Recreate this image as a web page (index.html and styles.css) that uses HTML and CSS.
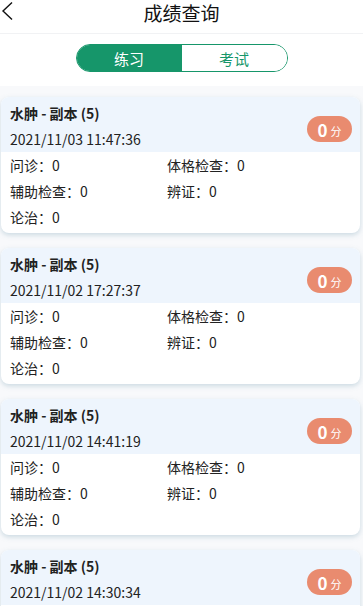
FILE: index.html
```html
<!DOCTYPE html>
<html lang="zh">
<head>
<meta charset="utf-8">
<link rel="stylesheet" href="styles.css">
</head>
<body>
<div class="topbar">
  <svg class="back" width="14" height="22" viewBox="0 0 14 22"><path d="M12 2.5 L3 11 L12 19.5" fill="none" stroke="#111" stroke-width="1.4"/></svg>
  <div class="title">成绩查询</div>
</div>
<div class="tabs-wrap">
  <div class="tabs">
    <div class="tab active">练习</div>
    <div class="tab">考试</div>
  </div>
</div>
<div class="list">
  <div class="card">
    <div class="card-head">
      <div class="head-text">
        <div class="name">水肿 - 副本 (5)</div>
        <div class="date">2021/11/03 11:47:36</div>
      </div>
      <div class="badge"><b>0</b><span>分</span></div>
    </div>
    <div class="card-body">
      <div>问诊：0</div><div>体格检查：0</div>
      <div>辅助检查：0</div><div>辨证：0</div>
      <div>论治：0</div>
    </div>
  </div>
  <div class="card">
    <div class="card-head">
      <div class="head-text">
        <div class="name">水肿 - 副本 (5)</div>
        <div class="date">2021/11/02 17:27:37</div>
      </div>
      <div class="badge"><b>0</b><span>分</span></div>
    </div>
    <div class="card-body">
      <div>问诊：0</div><div>体格检查：0</div>
      <div>辅助检查：0</div><div>辨证：0</div>
      <div>论治：0</div>
    </div>
  </div>
  <div class="card">
    <div class="card-head">
      <div class="head-text">
        <div class="name">水肿 - 副本 (5)</div>
        <div class="date">2021/11/02 14:41:19</div>
      </div>
      <div class="badge"><b>0</b><span>分</span></div>
    </div>
    <div class="card-body">
      <div>问诊：0</div><div>体格检查：0</div>
      <div>辅助检查：0</div><div>辨证：0</div>
      <div>论治：0</div>
    </div>
  </div>
  <div class="card">
    <div class="card-head">
      <div class="head-text">
        <div class="name">水肿 - 副本 (5)</div>
        <div class="date">2021/11/02 14:30:34</div>
      </div>
      <div class="badge"><b>0</b><span>分</span></div>
    </div>
    <div class="card-body">
      <div>问诊：0</div><div>体格检查：0</div>
      <div>辅助检查：0</div><div>辨证：0</div>
      <div>论治：0</div>
    </div>
  </div>
</div>
</body>
</html>
```
FILE: styles.css
```css
* { box-sizing: border-box; }
html, body { margin: 0; padding: 0; }
body {
  width: 363px;
  height: 606px;
  overflow: hidden;
  background: #f8f9fb;
  font-family: "Noto Sans CJK SC", "Noto Sans", sans-serif;
  color: #222;
}
.topbar {
  position: relative;
  height: 34px;
  background: #fff;
  display: flex;
  align-items: center;
  justify-content: center;
  border-bottom: 1px solid #f1f2f4;
}
.back {
  position: absolute;
  left: 0;
  top: 0;
}
.title {
  font-size: 19px;
  line-height: 24px;
  color: #111;
  margin-top: -8px;
}
.tabs-wrap {
  background: #fff;
  padding: 10px 0 14px;
  display: flex;
  justify-content: center;
}
.tabs {
  display: flex;
  width: 212px;
  height: 28px;
  border: 1.5px solid #16966a;
  border-radius: 14px;
  overflow: hidden;
}
.tab {
  flex: 1;
  display: flex;
  align-items: center;
  justify-content: center;
  font-size: 15px;
  color: #16966a;
  background: #fff;
}
.tab.active {
  background: #16966a;
  color: #fff;
}
.list {
  padding: 11px 3px 0 1px;
  display: flex;
  flex-direction: column;
  gap: 15px;
}
.card {
  background: #fff;
  border-radius: 8px;
  overflow: hidden;
  box-shadow: 0 2px 5px rgba(120, 160, 180, 0.35);
}
.card-head {
  background: #eef5fd;
  padding: 3px 8px 0 9px;
  height: 55px;
  display: flex;
  align-items: center;
  justify-content: space-between;
}
.head-text {
  align-self: flex-start;
}
.name {
  font-size: 14px;
  font-weight: 700;
  line-height: 26px;
  color: #222;
}
.date {
  font-size: 14px;
  line-height: 26px;
  color: #222;
}
.badge {
  background: #e98b6f;
  color: #fff;
  border-radius: 13px;
  width: 45px;
  height: 26px;
  margin-top: 6px;
  display: flex;
  align-items: center;
  justify-content: center;
  gap: 3px;
}
.badge b {
  font-size: 17px;
  font-weight: 700;
}
.badge span {
  font-size: 11px;
  margin-top: 3px;
}
.card-body {
  display: grid;
  grid-template-columns: 157px 1fr;
  padding: 0 9px 3px;
  font-size: 14px;
  line-height: 26px;
  color: #222;
}
```
